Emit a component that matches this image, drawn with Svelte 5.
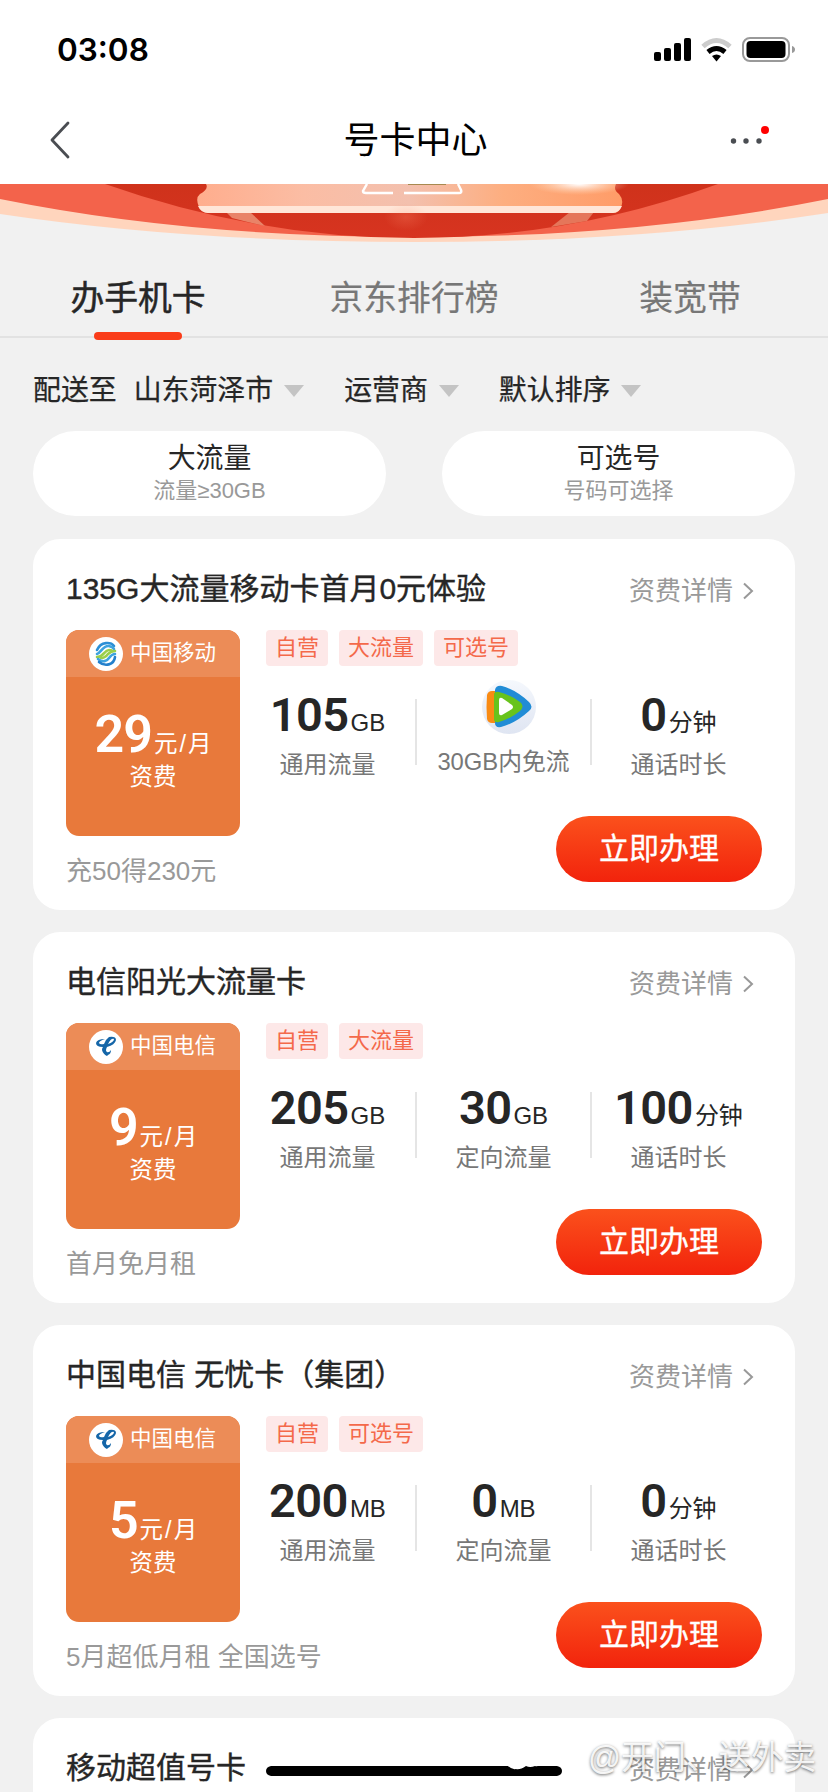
<script lang="ts">
  type Stat = { value?: string; unit?: string; label: string; video?: boolean };
  type Plan = {
    title: string;
    carrier: 'mobile' | 'telecom';
    price: string;
    tags: string[];
    stats: Stat[];
    note: string;
  };

  const tabs = ['办手机卡', '京东排行榜', '装宽带'];
  let activeTab = $state(0);

  const filters = ['山东菏泽市', '运营商', '默认排序'];

  const quick = [
    { name: '大流量', hint: '流量≥30GB' },
    { name: '可选号', hint: '号码可选择' },
  ];

  const carriers = { mobile: '中国移动', telecom: '中国电信' };

  const plans: Plan[] = [
    {
      title: '135G大流量移动卡首月0元体验',
      carrier: 'mobile',
      price: '29',
      tags: ['自营', '大流量', '可选号'],
      stats: [
        { value: '105', unit: 'GB', label: '通用流量' },
        { label: '30GB内免流', video: true },
        { value: '0', unit: '分钟', label: '通话时长' },
      ],
      note: '充50得230元',
    },
    {
      title: '电信阳光大流量卡',
      carrier: 'telecom',
      price: '9',
      tags: ['自营', '大流量'],
      stats: [
        { value: '205', unit: 'GB', label: '通用流量' },
        { value: '30', unit: 'GB', label: '定向流量' },
        { value: '100', unit: '分钟', label: '通话时长' },
      ],
      note: '首月免月租',
    },
    {
      title: '中国电信 无忧卡（集团）',
      carrier: 'telecom',
      price: '5',
      tags: ['自营', '可选号'],
      stats: [
        { value: '200', unit: 'MB', label: '通用流量' },
        { value: '0', unit: 'MB', label: '定向流量' },
        { value: '0', unit: '分钟', label: '通话时长' },
      ],
      note: '5月超低月租 全国选号',
    },
  ];
</script>

{#snippet cardHead(title: string)}
  <header class="card-head">
    <h3 class="card-title">{title}</h3>
    <a class="detail" href="#detail">
      资费详情
      <svg width="12" height="18" viewBox="0 0 12 18">
        <path d="M2 1.500 10 9 2 16.500" fill="none" stroke="#999" stroke-width="2" />
      </svg>
    </a>
  </header>
{/snippet}

<div class="page">
  <div class="status">
    <span class="time">03:08</span>
    <svg class="signals" width="144" height="28" viewBox="0 0 144 28">
      <rect x="3" y="16" width="7" height="9" rx="2" />
      <rect x="13" y="12" width="7" height="13" rx="2" />
      <rect x="23" y="7" width="7" height="18" rx="2" />
      <rect x="33" y="2" width="7" height="23" rx="2" />
      <g fill="none" stroke-width="5">
        <path d="M52 10.500Q65.500-1.500 79 10.500" stroke="#ccc" />
        <path d="M57 16Q65.500 9 74 16" stroke="#000" />
      </g>
      <path d="M61 20Q65.500 17 70 20L65.500 25.500Z" />
      <rect x="92" y="2" width="46" height="23" rx="7" fill="none" stroke="#999" stroke-width="2" />
      <rect x="95.500" y="5" width="39" height="17" rx="4" />
      <path d="M141 10Q144 11 144 13.500T141 17Z" fill="#999" />
    </svg>
  </div>

  <nav class="navbar">
    <svg width="24" height="40" viewBox="0 0 24 40">
      <path d="M20 3 4 20 20 37" fill="none" stroke="#4a4d52" stroke-width="2.800" stroke-linecap="round" stroke-linejoin="round" />
    </svg>
    <h1>号卡中心</h1>
    <svg width="40" height="28" viewBox="0 0 40 28">
      <g fill="#4a4d52">
        <circle cx="4.500" cy="15" r="2.700" />
        <circle cx="17" cy="15" r="2.700" />
        <circle cx="30" cy="15" r="2.700" />
      </g>
      <circle cx="36" cy="4" r="4" fill="#f00" />
    </svg>
  </nav>

  <svg class="banner" width="828" height="60" viewBox="0 0 828 60">
    <defs>
      <linearGradient id="stage" x1="0" x2="1" y2="0">
        <stop offset="0" stop-color="#ffad8d" />
        <stop offset=".25" stop-color="#fbbda4" />
        <stop offset=".5" stop-color="#f3c0ae" />
        <stop offset=".72" stop-color="#fdae80" />
        <stop offset="1" stop-color="#ff9c68" />
      </linearGradient>
      <linearGradient id="shade" x1="0" x2="0" y2="1">
        <stop offset="0" stop-color="#cf321b" />
        <stop offset="1" stop-color="#d73420" />
      </linearGradient>
      <radialGradient id="glow">
        <stop offset="0" stop-color="#fff" />
        <stop offset=".2" stop-color="#fff" stop-opacity=".75" />
        <stop offset="1" stop-color="#ffd9b8" stop-opacity="0" />
      </radialGradient>
      <radialGradient id="spot">
        <stop offset="0" stop-color="#ff9070" stop-opacity=".25" />
        <stop offset="1" stop-color="#ff9070" stop-opacity="0" />
      </radialGradient>
    </defs>
    <path d="M0 0H828V29Q640 58 414 58T0 30Z" fill="#ffd5bd" />
    <path d="M0 0H828V15Q640 53 414 53T0 15Z" fill="#f3634b" />
    <path d="M105 0H718Q570 54 414 54T105 0Z" fill="url(#shade)" />
    <path d="M226 28H250L265 42Q247 38 232 34Z" fill="#e98368" />
    <path d="M570 28H594L587 37L551 43Z" fill="#e5765a" />
    <path d="M206 0H616Q613 6 619 10Q625 17 620 25Q618 29 613 29H208Q201 28 199 23Q195 14 200 10Q209 5 206 0Z" fill="url(#stage)" />
    <path d="M198 22H622Q619 29 613 29H208Q201 29 198 22Z" fill="#ffe6d8" />
    <path d="M367 0 363 7Q363 9 366 9H393M404 9H459Q462 9 461 6L458 0" fill="none" stroke="#fff" stroke-width="2.500" />
    <path d="M408 0H446V1H408Z" fill="#a8894f" />
    <ellipse cx="579" cy="0" rx="50" ry="11" fill="url(#glow)" />
    <ellipse cx="406" cy="33" rx="22" ry="14" fill="url(#spot)" />
  </svg>

  <div class="tabs">
    {#each tabs as tab, i}
      <button class="tab" class:active={i === activeTab} onclick={() => (activeTab = i)}>{tab}</button>
    {/each}
  </div>

  <div class="filters">
    <span class="ship">配送至</span>
    {#each filters as filter}
      <span class="filter">{filter}<i class="caret"></i></span>
    {/each}
  </div>

  <div class="quick">
    {#each quick as item}
      <div class="pill">
        <b>{item.name}</b>
        <small>{item.hint}</small>
      </div>
    {/each}
  </div>

  <main class="list">
    {#each plans as plan}
      <article class="card">
        {@render cardHead(plan.title)}
        <div class="card-body">
          <div class="price-box">
            <div class="carrier">
              <svg width="34" height="34" viewBox="0 0 34 34">
                <circle cx="17" cy="17" r="17" fill="#fff" />
                {#if plan.carrier === 'mobile'}
                  <g fill="none" stroke-width="2.600" stroke-linecap="round">
                    <path d="M8 13C12 4 22 5 25 9" stroke="#2c8fd6" />
                    <path d="M8 17C12 16 14 8 20 9Q24 10 25 12" stroke="#3fa3df" />
                    <path d="M8 20C15 20 15 13 20 13Q23 13 23 14" stroke="#9bcf4b" />
                    <path d="M11 20C13 22 17 20 19 17Q22 14 26 14" stroke="#9bcf4b" />
                    <path d="M9 22C14 26 18 24 20 21Q23 17 26 17" stroke="#3fa3df" />
                    <path d="M10 25C16 30 25 28 26 20" stroke="#2480cc" />
                  </g>
                {:else}
                  <path
                    d="M20 7Q27 6 27 10Q26 15 18 17Q16 21 18 22Q20 23 22 20Q22 24 19 25L18 26Q14 24 13 20Q13 18 14 17Q7 17 7 13Q8 9 16 9Q10 11 10 13Q11 15 15 14Q17 9 20 7ZM19 14Q25 12 25 9Q22 8 19 14Z"
                    fill="#1566a8"
                    fill-rule="evenodd"
                  />
                {/if}
              </svg>
              <span>{carriers[plan.carrier]}</span>
            </div>
            <div class="price"><strong>{plan.price}</strong>元<i>/</i>月</div>
            <div class="price-label">资费</div>
          </div>

          <div class="info">
            <div class="tags">
              {#each plan.tags as tag}
                <span class="tag">{tag}</span>
              {/each}
            </div>
            <div class="stats">
              {#each plan.stats as stat}
                <div class="stat" class:free={stat.video}>
                  {#if stat.video}
                    <svg class="video" width="54" height="54" viewBox="0 0 54 54">
                      <defs>
                        <linearGradient id="disc" x1="0" x2="0" y2="1">
                          <stop offset="0" stop-color="#f5f8fd" />
                          <stop offset="1" stop-color="#dfe5f2" />
                        </linearGradient>
                      </defs>
                      <circle cx="27" cy="27" r="27" fill="url(#disc)" />
                      <path d="M5 15Q6 11 10 11H14V43H10Q6 43 5 39Q4 27 5 15Z" fill="#f98b14" />
                      <path d="M13 10Q14 5 20 6Q34 10 47 22Q52 27 47 31Q34 43 19 47Q13 48 13 43Z" fill="#218cd6" />
                      <path d="M12 15Q12 11 17 12Q29 15 38 22Q43 26 38 31Q28 39 17 42Q12 43 12 39Z" fill="#68c31c" />
                      <path d="M17 20Q17 17 20 18L30 25Q32 27 30 29L20 35Q17 36 17 33Z" fill="#fff" />
                    </svg>
                  {:else}
                    <div class="amount"><strong>{stat.value}</strong><span>{stat.unit}</span></div>
                  {/if}
                  <div class="stat-label">{stat.label}</div>
                </div>
              {/each}
            </div>
          </div>
        </div>
        <footer class="card-foot">
          <span class="note">{plan.note}</span>
          <button class="apply">立即办理</button>
        </footer>
      </article>
    {/each}
    <article class="card">
      {@render cardHead('移动超值号卡')}
    </article>
  </main>

  <svg class="home-bar" width="296" height="14" viewBox="0 0 296 14">
    <path d="M5 2H291Q296 3 296 7T291 12H5Q0 11 0 7T5 2Z" />
    <path d="M240 0H276Q272 3 269 2Q264 4 260 2Q254 6 250 5Q245 6 240 0Z" fill="#fff" />
  </svg>
  <div class="watermark">@开门、送外卖</div>
</div>

<style>
  :global(body) {
    margin: 0;
  }

  .page {
    position: relative;
    width: 828px;
    height: 1792px;
    overflow: hidden;
    background: #f1f1f1;
    color: #262626;
    font-family: 'Liberation Sans', 'Noto Sans CJK SC', sans-serif;
  }

  .page :is(div, nav, main, article, header, footer, button, span) {
    box-sizing: border-box;
  }

  svg {
    display: block;
    flex: none;
  }

  button {
    border: 0;
    padding: 0;
    background: none;
    font-family: inherit;
  }

  .status {
    display: flex;
    justify-content: space-between;
    align-items: center;
    height: 100px;
    padding: 0 33px 0 57px;
    background: #fff;
  }

  .time {
    font: 600 31.5px/1 Inter, sans-serif;
    color: #000;
  }

  .navbar {
    display: flex;
    justify-content: space-between;
    align-items: center;
    height: 84px;
    padding: 0 59px 4px 48px;
    background: #fff;
  }

  .navbar h1 {
    margin: 2px 0 0;
    padding-left: 30px;
    font-size: 36px;
    font-weight: 400;
    line-height: 1;
    color: #000;
  }

  .tabs {
    display: flex;
    height: 94px;
    border-bottom: 2px solid #e2e2e2;
  }

  .tab {
    position: relative;
    flex: 1;
    padding-top: 17px;
    font-size: 33.8px;
    line-height: 1;
    color: #777;
    -webkit-text-stroke: 0.2px;
  }

  .tab.active {
    color: #262626;
    -webkit-text-stroke: 0.5px;
  }

  .tab.active::after {
    content: '';
    position: absolute;
    left: 94px;
    bottom: -4px;
    width: 88px;
    height: 8px;
    border-radius: 4px;
    background: #fa3c19;
  }

  .filters {
    display: flex;
    align-items: center;
    height: 93px;
    padding: 13px 33px 0;
    font-size: 27.9px;
    line-height: 1;
    -webkit-text-stroke: 0.25px;
  }

  .ship {
    margin-right: 17px;
  }

  .filter {
    display: flex;
    align-items: center;
    margin-right: 40px;
  }

  .caret {
    margin-left: 11px;
    border: 10px solid transparent;
    border-top: 12px solid #c4c4c4;
    border-bottom: 0;
  }

  .quick {
    display: flex;
    justify-content: space-between;
    padding: 0 33px;
  }

  .pill {
    display: flex;
    flex-direction: column;
    align-items: center;
    width: 353px;
    height: 85px;
    padding-top: 13px;
    border-radius: 43px;
    background: #fff;
  }

  .pill b {
    font-size: 27.9px;
    font-weight: 400;
    line-height: 30px;
  }

  .pill small {
    margin-top: 5px;
    font-size: 22px;
    line-height: 24px;
    color: #999;
  }

  .list {
    display: flex;
    flex-direction: column;
    gap: 22px;
    padding: 23px 33px 0;
  }

  .card {
    flex: none;
    height: 371px;
    padding: 0 33px;
    border-radius: 27px;
    background: #fff;
  }

  .card-head {
    display: flex;
    justify-content: space-between;
    align-items: center;
    height: 91px;
    padding: 9px 8px 0 0;
  }

  .card-title {
    margin: 0;
    font-size: 30px;
    font-weight: 400;
    line-height: 1;
    -webkit-text-stroke: 0.4px;
  }

  .detail {
    display: flex;
    align-items: center;
    gap: 9px;
    margin-top: 4px;
    font-size: 26px;
    line-height: 1;
    color: #999;
    text-decoration: none;
  }

  .card-body {
    display: flex;
  }

  .price-box {
    width: 175px;
    height: 206px;
    overflow: hidden;
    border-radius: 13px;
    background: #e8793b;
    color: #fff;
    text-align: center;
  }

  .carrier {
    display: flex;
    align-items: center;
    gap: 7px;
    height: 47px;
    padding-left: 23px;
    background: #ec8c57;
    font-size: 21.5px;
    line-height: 1;
  }

  .price {
    height: 79px;
    padding-top: 28px;
    font-size: 23.5px;
    line-height: 60px;
    white-space: nowrap;
  }

  .price strong {
    margin-right: 2px;
    font: 600 52px/60px Roboto, sans-serif;
    letter-spacing: -1px;
  }

  .price i {
    margin: 0 2px;
    font-style: normal;
  }

  .price-label {
    padding-top: 9px;
    font-size: 23.5px;
    line-height: 24px;
  }

  .info {
    width: 525px;
    margin-right: -3px;
  }

  .tags {
    display: flex;
    gap: 11px;
    height: 69px;
    padding-left: 26px;
  }

  .tag {
    height: 36px;
    padding: 0 9px;
    border-radius: 4px;
    background: #fde8e8;
    color: #f4694a;
    font-size: 22px;
    line-height: 36px;
  }

  .stats {
    display: flex;
    height: 66px;
  }

  .stat {
    width: 175px;
    flex: none;
    text-align: center;
    white-space: nowrap;
  }

  .stat + .stat {
    border-left: 2px solid #e5e5e5;
  }

  .amount {
    height: 50px;
    margin-top: -9px;
    font-size: 24px;
    line-height: 50px;
  }

  .amount strong {
    margin-right: 2px;
    font: 600 47px/50px Roboto, sans-serif;
    letter-spacing: -0.6px;
  }

  .stat-label {
    margin-top: 13px;
    font-size: 24px;
    line-height: 24px;
    color: #777;
  }

  .video {
    margin: -19px 0 0 65px;
  }

  .free .stat-label {
    margin-top: 16px;
    font-size: 23.8px;
  }

  .card-foot {
    display: flex;
    justify-content: space-between;
    align-items: flex-start;
    margin-top: -20px;
  }

  .note {
    padding-top: 41px;
    font-size: 26px;
    line-height: 28px;
    color: #999;
  }

  .apply {
    width: 206px;
    height: 66px;
    border-radius: 33px;
    background: linear-gradient(#fb511c, #f2230c);
    color: #fff;
    font-size: 30px;
    line-height: 62px;
    -webkit-text-stroke: 0.35px;
  }

  .home-bar {
    position: absolute;
    left: 266px;
    top: 1764px;
  }

  .watermark {
    position: absolute;
    left: 588px;
    top: 1738px;
    font-size: 32.500px;
    line-height: 40px;
    color: rgba(255, 255, 255, 0.9);
    text-shadow: 0 1px 3px rgba(0, 0, 0, 0.6);
  }
</style>
